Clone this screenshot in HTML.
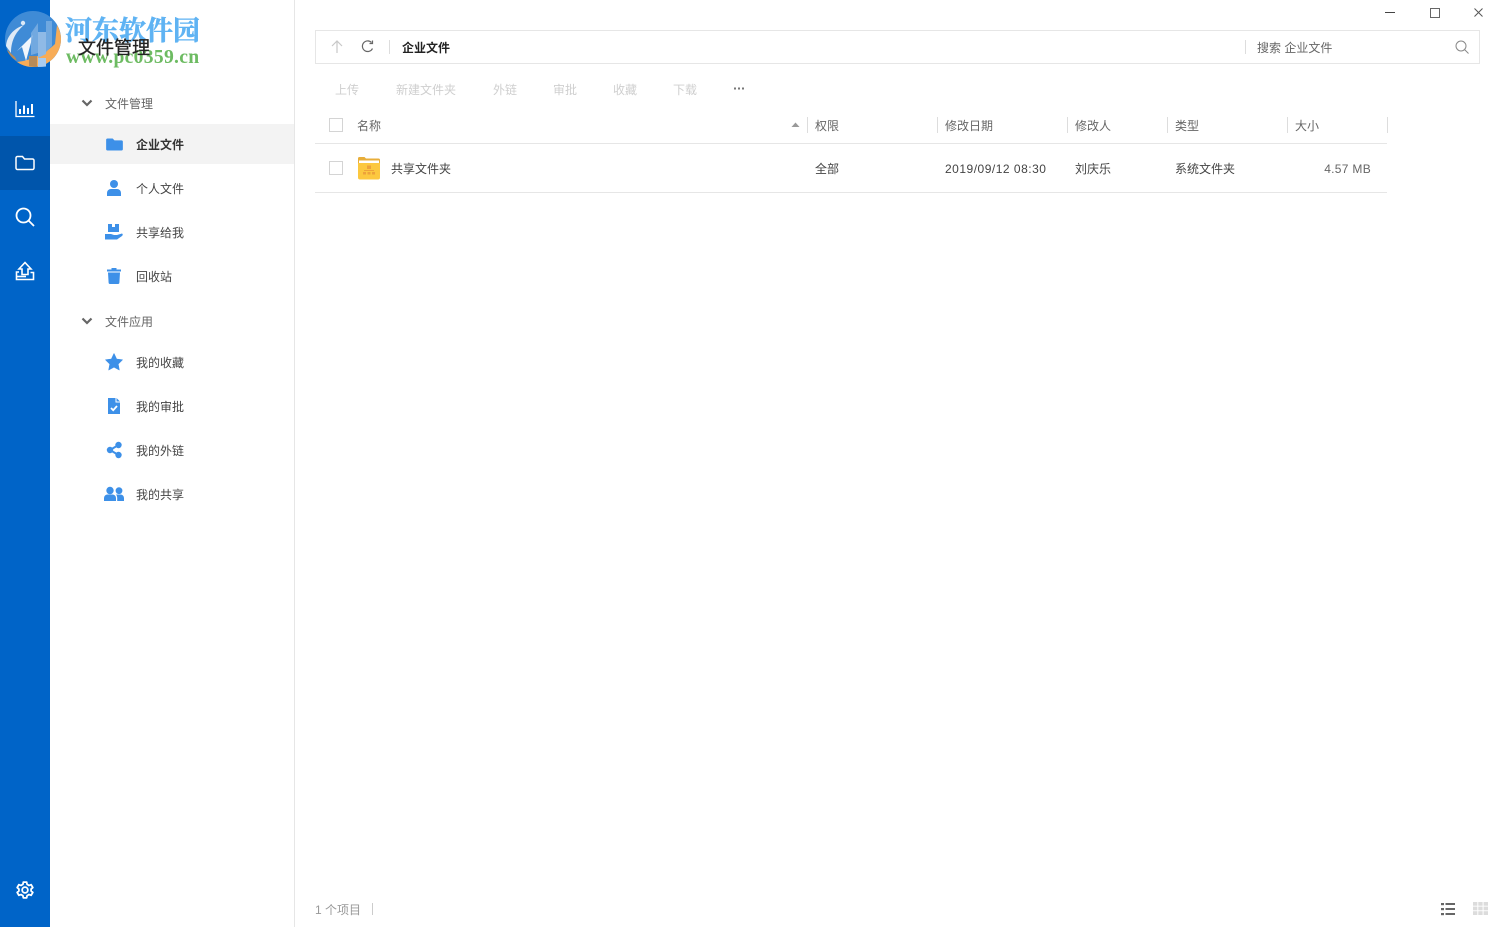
<!DOCTYPE html>
<html lang="zh-CN">
<head>
<meta charset="utf-8">
<title>文件管理</title>
<style>
html,body{margin:0;padding:0;background:#fff}
body{position:relative;width:1500px;height:927px;overflow:hidden;font-family:"Liberation Sans","Noto Sans CJK SC",sans-serif;font-size:12px;color:#333}
.t{position:absolute;white-space:nowrap;line-height:16px;font-size:12px}
.b{position:absolute}
svg{position:absolute;overflow:visible}
.g{color:#666}.d{color:#444}.l{color:#cfcfcf}
.sep{position:absolute;width:1px;height:16px;background:#ddd}
.cb{position:absolute;width:12px;height:12px;border:1px solid #d4d4d4;left:329px}
</style>
</head>
<body>
<!-- rail -->
<div class="b" style="left:0;top:0;width:50px;height:927px;background:#0064c8"></div>
<div class="b" style="left:0;top:136px;width:50px;height:54px;background:#0055ab"></div>
<!-- side panel -->
<div class="b" style="left:294px;top:0;width:1px;height:927px;background:#e6e6e6"></div>
<div class="b" style="left:50px;top:124px;width:244px;height:40px;background:#f3f3f3"></div>

<!-- rail icons -->
<svg style="left:15px;top:100px" width="20" height="18" viewBox="0 0 20 18" fill="none" stroke="#fff" stroke-width="1.300"><path d="M1 1V16.500H19.500"/><path d="M5 14V9M9 14V5.500M13 14V8M17 14V4" stroke-width="2"/></svg>
<svg style="left:15px;top:155px" width="20" height="16" viewBox="0 0 20 16" fill="none" stroke="#fff" stroke-width="1.500"><path d="M1 3a1.500 1.500 0 0 1 1.500-1.500H7.500L9.500 4H17.500A1.500 1.500 0 0 1 19 5.500V13a1.500 1.500 0 0 1-1.500 1.500H2.500A1.500 1.500 0 0 1 1 13Z"/></svg>
<svg style="left:15px;top:207px" width="20" height="20" viewBox="0 0 20 20" fill="none" stroke="#fff" stroke-width="1.800"><circle cx="8.500" cy="8.500" r="7"/><path d="M13.500 13.500L19 19"/></svg>
<svg style="left:15px;top:261px" width="20" height="20" viewBox="0 0 20 20" fill="none" stroke="#fff" stroke-width="1.600"><path d="M10 1.500L4 8H7V13.500H13V8H16Z"/><path d="M4 11H1.500V18.500H18.500V11.500H15.500"/><path d="M1.500 15.500H11"/></svg>
<svg style="left:16px;top:881px" width="18" height="18" viewBox="0 0 24 24" fill="none" stroke="#fff" stroke-width="2.400"><circle cx="12" cy="12" r="3.800"/><path d="M9.800 1.500h4.400l.6 3 2.500 1.400 2.900-1 2.200 3.800-2.300 2v2.600l2.300 2-2.200 3.800-2.900-1-2.500 1.400-.6 3H9.800l-.6-3-2.500-1.400-2.900 1-2.200-3.800 2.300-2v-2.600l-2.300-2 2.200-3.800 2.900 1 2.500-1.400Z" stroke-linejoin="round"/></svg>

<!-- logo -->
<svg style="left:5px;top:11px" width="57" height="57" viewBox="0 0 57 57">
<circle cx="28" cy="28" r="28" fill="#3f8bd6"/>
<path d="M56 28A28 28 0 0 1 12 51C22 50 38 45 50 33L52 14A28 28 0 0 1 56 28Z" fill="#f7ac57"/>
<path d="M33 21H41V43L33 47Z" fill="#8fbae6"/>
<path d="M41 10H47V35L41 41Z" fill="#6fa8e0"/>
<path d="M33 47H41V55.500Q37 56 33 56Z" fill="#a9cbee"/>
<path d="M24 45H32V56Q27 56 24 55Z" fill="#b78b58"/>
<path d="M12 50C8 48 4 44 2 39L10 46Z" fill="#b78b58"/>
<path d="M1 35C2 24 10 17 19 14C12 20 6 28 6 42Z" fill="#dfeaf6"/>
<path d="M12 40L28 24L21 50L17 36Z" fill="#f1f6fc"/>
<path d="M26 22L33 12V42L26 44Z" fill="#7fb0e2" opacity=".8"/>
<circle cx="18" cy="12" r="2.200" fill="#dbe9f7"/>
</svg>

<!-- watermark and title -->
<div class="t" style="left:65px;top:13px;font:bold 27px/32px 'Noto Serif CJK SC','Liberation Serif',serif;color:#5fb3f3;-webkit-text-stroke:.5px #5fb3f3">河东软件园</div>
<div class="t" style="left:66px;top:48px;font:bold 19.600px/20px 'Liberation Serif',serif;color:#6dbb62;letter-spacing:.3px">www.pc0359.cn</div>
<div class="t" style="left:78px;top:36px;font-size:18px;line-height:24px;color:#222;-webkit-text-stroke:.3px #222">文件管理</div>

<!-- nav -->
<svg style="left:81px;top:99px" width="12" height="8" viewBox="0 0 12 8" fill="none" stroke="#666" stroke-width="2.200"><path d="M1.500 1.500L6 6L10.500 1.500"/></svg>
<div class="t g" style="left:105px;top:96px">文件管理</div>
<svg style="left:106px;top:138px" width="17" height="13" viewBox="0 0 18 14" fill="#3d90e8"><path d="M0 2a1.500 1.500 0 0 1 1.500-1.500H7L9 2.500H16.500A1.500 1.500 0 0 1 18 4V12a1.500 1.500 0 0 1-1.500 1.500H1.500A1.500 1.500 0 0 1 0 12Z"/></svg>
<div class="t" style="left:136px;top:137px;color:#333;font-weight:bold">企业文件</div>
<svg style="left:107px;top:180px" width="14" height="16" viewBox="0 0 14 16" fill="#3d90e8"><circle cx="7" cy="4" r="4"/><path d="M0 16V13a4 4 0 0 1 4-4H10a4 4 0 0 1 4 4V16Z"/></svg>
<div class="t d" style="left:136px;top:181px">个人文件</div>
<svg style="left:105px;top:224px" width="18" height="16" viewBox="0 0 18 16" fill="#3d90e8"><path d="M3 0H7V3H10V0H14V8H3Z"/><path d="M0 10H6L9 11H12L17 9.500C18 10 18 11 17 12L12 15.500H0Z"/></svg>
<div class="t d" style="left:136px;top:225px">共享给我</div>
<svg style="left:107px;top:268px" width="14" height="16" viewBox="0 0 14 16" fill="#3d90e8"><path d="M0 1.500H4.500V0H9.500V1.500H14V3.500H0Z"/><path d="M1 4.500H13L12.400 14.500A1.500 1.500 0 0 1 11 16H3A1.500 1.500 0 0 1 1.600 14.500Z"/></svg>
<div class="t d" style="left:136px;top:269px">回收站</div>

<svg style="left:81px;top:317px" width="12" height="8" viewBox="0 0 12 8" fill="none" stroke="#666" stroke-width="2.200"><path d="M1.500 1.500L6 6L10.500 1.500"/></svg>
<div class="t g" style="left:105px;top:314px">文件应用</div>
<svg style="left:105px;top:353px" width="18" height="18" viewBox="0 0 18 18" fill="#3d90e8" stroke="#3d90e8" stroke-width=".6" stroke-linejoin="round"><path d="M9 .5L11.600 6 17.500 6.800 13.200 11 14.300 17 9 14.100 3.700 17 4.800 11 .5 6.800 6.400 6Z"/></svg>
<div class="t d" style="left:136px;top:355px">我的收藏</div>
<svg style="left:108px;top:398px" width="12" height="16" viewBox="0 0 12 16"><path fill="#3d90e8" d="M0 0H7.500V4.500H12V16H0Z"/><path fill="#3d90e8" d="M8.500 0L12 3.500H8.500Z"/><path d="M3 10L5.200 12.200L9 8" fill="none" stroke="#fff" stroke-width="1.800"/></svg>
<div class="t d" style="left:136px;top:399px">我的审批</div>
<svg style="left:107px;top:442px" width="15" height="16" viewBox="0 0 15 16"><path d="M11.500 3L3 8L11.500 13" fill="none" stroke="#3d90e8" stroke-width="2"/><g fill="#3d90e8"><circle cx="11.500" cy="3" r="3.200"/><circle cx="3" cy="8" r="3.200"/><circle cx="11.500" cy="13" r="3.200"/></g></svg>
<div class="t d" style="left:136px;top:443px">我的外链</div>
<svg style="left:104px;top:487px" width="20" height="14" viewBox="0 0 20 14" fill="#3d90e8"><circle cx="6" cy="3.500" r="3.700"/><circle cx="15" cy="3.700" r="3.400"/><path d="M0 14V11a3.500 3.500 0 0 1 3.500-3.500H8.500A3.500 3.500 0 0 1 12 11V14Z"/><path d="M13.200 14V11C13.200 9.500 12.800 8.500 12 7.500H16.500A3.500 3.500 0 0 1 20 11V14Z"/></svg>
<div class="t d" style="left:136px;top:487px">我的共享</div>

<!-- window controls -->
<div class="b" style="left:1385px;top:12px;width:10px;height:1px;background:#444"></div>
<div class="b" style="left:1430px;top:8px;width:8px;height:8px;border:1px solid #666"></div>
<svg style="left:1474px;top:8px" width="9" height="9" viewBox="0 0 9 9" stroke="#555" stroke-width="1" fill="none"><path d="M.5 .5L8.500 8.500M8.500 .5L.5 8.500"/></svg>

<!-- address bar -->
<div class="b" style="left:315px;top:30px;width:1163px;height:32px;border:1px solid #e6e6e6"></div>
<svg style="left:331px;top:40px" width="12" height="13" viewBox="0 0 12 13" fill="none" stroke="#c8c8c8" stroke-width="1.200"><path d="M6 13V1M1 6L6 1L11 6"/></svg>
<svg style="left:361px;top:40px" width="13" height="13" viewBox="0 0 13 13" fill="none" stroke="#666" stroke-width="1.200"><path d="M11.500 8.500A5.300 5.300 0 1 1 10.500 2.500"/><path d="M11.500 .5V3.500H8.500"/></svg>
<div class="b" style="left:389px;top:40px;width:1px;height:14px;background:#ddd"></div>
<div class="t" style="left:402px;top:40px;color:#222;font-weight:bold">企业文件</div>
<div class="b" style="left:1245px;top:40px;width:1px;height:14px;background:#ddd"></div>
<div class="t g" style="left:1257px;top:40px">搜索 企业文件</div>
<svg style="left:1455px;top:40px" width="14" height="14" viewBox="0 0 14 14" fill="none" stroke="#888" stroke-width="1"><circle cx="6" cy="6" r="5"/><path d="M9.500 9.500L13.500 13.500"/></svg>

<!-- toolbar -->
<div class="t l" style="left:335px;top:82px">上传</div>
<div class="t l" style="left:396px;top:82px">新建文件夹</div>
<div class="t l" style="left:493px;top:82px">外链</div>
<div class="t l" style="left:553px;top:82px">审批</div>
<div class="t l" style="left:613px;top:82px">收藏</div>
<div class="t l" style="left:673px;top:82px">下载</div>
<svg style="left:733px;top:87px" width="12" height="3" viewBox="0 0 12 3" fill="#777"><rect x="1" y=".5" width="2" height="2"/><rect x="5" y=".5" width="2" height="2"/><rect x="9" y=".5" width="2" height="2"/></svg>

<!-- table head -->
<div class="cb" style="top:118px"></div>
<div class="t g" style="left:357px;top:118px">名称</div>
<svg style="left:791px;top:122px" width="9" height="6" viewBox="0 0 9 6" fill="#999"><path d="M4.500 .5L8.500 5H.5Z"/></svg>
<div class="sep" style="left:807px;top:117px"></div>
<div class="t g" style="left:815px;top:118px">权限</div>
<div class="sep" style="left:937px;top:117px"></div>
<div class="t g" style="left:945px;top:118px">修改日期</div>
<div class="sep" style="left:1067px;top:117px"></div>
<div class="t g" style="left:1075px;top:118px">修改人</div>
<div class="sep" style="left:1167px;top:117px"></div>
<div class="t g" style="left:1175px;top:118px">类型</div>
<div class="sep" style="left:1287px;top:117px"></div>
<div class="t g" style="left:1295px;top:118px">大小</div>
<div class="sep" style="left:1387px;top:117px"></div>
<div class="b" style="left:315px;top:143px;width:1072px;height:1px;background:#e6e6e6"></div>

<!-- row -->
<div class="cb" style="top:161px"></div>
<svg style="left:358px;top:157px" width="22" height="23" viewBox="0 0 22 23">
<path d="M0 1.500A1.500 1.500 0 0 1 1.500 0H6.500L8 1.500H20.500A1.500 1.500 0 0 1 22 3V6H0Z" fill="#e8ae3a"/>
<rect x="1" y="3.500" width="20" height="2.500" fill="#fff"/>
<path d="M0 6H22V20.500a2 2 0 0 1-2 2H2a2 2 0 0 1-2-2Z" fill="#fcc83f"/>
<g fill="#eda23a"><rect x="9" y="8.500" width="4" height="3.500"/><rect x="6" y="13" width="10" height="1"/><rect x="5" y="15" width="3" height="2.500"/><rect x="9.500" y="15" width="3" height="2.500"/><rect x="14" y="15" width="3" height="2.500"/></g>
</svg>
<div class="t d" style="left:391px;top:161px">共享文件夹</div>
<div class="t d" style="left:815px;top:161px">全部</div>
<div class="t d" style="left:945px;top:161px;letter-spacing:.5px">2019/09/12 08:30</div>
<div class="t d" style="left:1075px;top:161px">刘庆乐</div>
<div class="t d" style="left:1175px;top:161px">系统文件夹</div>
<div class="t g" style="left:1271px;width:100px;text-align:right;top:161px;letter-spacing:.3px">4.57 MB</div>
<div class="b" style="left:315px;top:192px;width:1072px;height:1px;background:#e6e6e6"></div>

<!-- footer -->
<div class="t" style="left:315px;top:902px;color:#999">1 个项目</div>
<div class="b" style="left:372px;top:903px;width:1px;height:12px;background:#ccc"></div>
<svg style="left:1441px;top:903px" width="14" height="12" viewBox="0 0 14 12" fill="#666"><rect x="0" y="0" width="3" height="2.200"/><rect x="4.500" y="0" width="9.500" height="2"/><rect x="0" y="5" width="3" height="2.200"/><rect x="4.500" y="5" width="9.500" height="2"/><rect x="0" y="10" width="3" height="2.200"/><rect x="4.500" y="10" width="9.500" height="2"/></svg>
<svg style="left:1473px;top:902px" width="15" height="13" viewBox="0 0 15 13" fill="#dcdcdc"><rect x="0" y="0" width="4.300" height="3.700"/><rect x="5.300" y="0" width="4.300" height="3.700"/><rect x="10.600" y="0" width="4.400" height="3.700"/><rect x="0" y="4.600" width="4.300" height="3.700"/><rect x="5.300" y="4.600" width="4.300" height="3.700"/><rect x="10.600" y="4.600" width="4.400" height="3.700"/><rect x="0" y="9.200" width="4.300" height="3.800"/><rect x="5.300" y="9.200" width="4.300" height="3.800"/><rect x="10.600" y="9.200" width="4.400" height="3.800"/></svg>
</body>
</html>
